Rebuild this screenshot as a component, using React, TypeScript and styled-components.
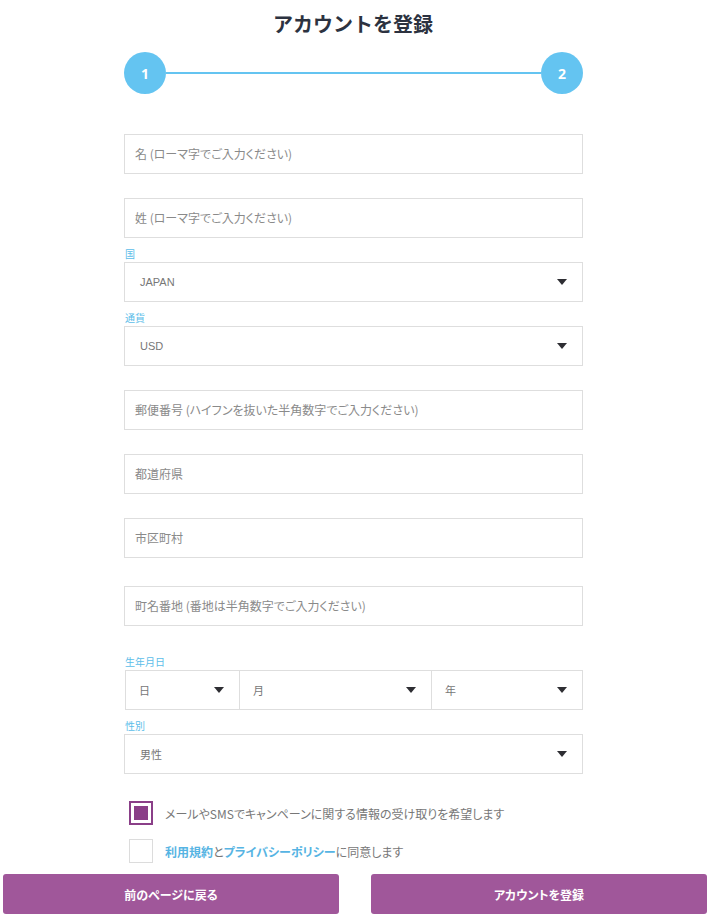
import { createGlobalStyle, styled } from 'styled-components';

const GlobalStyle = createGlobalStyle`
  body {
    margin: 0;
    background: #fff;
    font-family: 'Noto Sans CJK JP', 'Liberation Sans', sans-serif;
    font-feature-settings: 'palt';
  }
  * {
    box-sizing: border-box;
  }
  input, button {
    font-feature-settings: 'palt';
  }
`;

const Page = styled.div`
  width: 712px;
  padding-top: 11px;
`;

const Title = styled.h1`
  margin: 0;
  padding-right: 6px;
  text-align: center;
  font-size: 20px;
  line-height: 26px;
  font-weight: 700;
  color: #2c3240;
  font-feature-settings: normal;
`;

const Stepper = styled.div`
  display: flex;
  align-items: center;
  width: 459px;
  margin: 15px 0 0 124px;
`;

const StepCircle = styled.div`
  width: 42px;
  height: 42px;
  border-radius: 50%;
  background: #64c4f1;
  color: #fff;
  display: flex;
  align-items: center;
  justify-content: center;
  font-family: 'Open Sans', 'Liberation Sans', sans-serif;
  font-weight: 700;
  font-size: 14px;
`;

const StepLine = styled.div`
  flex: 1;
  height: 2px;
  background: #64c4f1;
`;

const Form = styled.form`
  width: 459px;
  margin: 40px 0 0 124px;
`;

const Group = styled.div<{ $gap: number }>`
  margin-top: ${(p) => p.$gap}px;
`;

const Label = styled.div`
  height: 14px;
  font-size: 10px;
  line-height: 12px;
  color: #5cbde9;
  padding-left: 1px;
`;

const TextInput = styled.input`
  display: block;
  width: 100%;
  height: 40px;
  border: 1px solid #dedede;
  border-radius: 0;
  padding: 0 10px 2px;
  font-family: 'Noto Sans CJK JP', 'Liberation Sans', sans-serif;
  font-size: 12px;
  color: #555;
  &::placeholder {
    color: #8a8a8a;
  }
`;

const SelectBox = styled.div`
  display: flex;
  align-items: center;
  justify-content: space-between;
  height: 40px;
  border: 1px solid #dedede;
  padding: 0 15px;
  font-family: 'Liberation Sans', 'Noto Sans CJK JP', sans-serif;
  font-size: 11px;
  color: #777;
`;

const Caret = styled.span`
  width: 0;
  height: 0;
  border-left: 5px solid transparent;
  border-right: 5px solid transparent;
  border-top: 6px solid #2e2e33;
`;

const DateRow = styled.div`
  display: grid;
  grid-template-columns: 113px 192px 1fr;
  margin-left: 1px;
  border: 1px solid #dedede;
  & > div {
    border: 0;
    height: 38px;
    padding-left: 13px;
  }
  & > div + div {
    border-left: 1px solid #dedede;
  }
`;

const CheckRow = styled.label<{ $gap: number }>`
  display: flex;
  align-items: center;
  gap: 12px;
  margin: ${(p) => p.$gap}px 0 0 5px;
  font-size: 12px;
  color: #777;
`;

const Box = styled.span<{ $checked?: boolean }>`
  width: 24px;
  height: 24px;
  flex: none;
  padding: 3px;
  border: ${(p) => (p.$checked ? '2px solid #8a3f88' : '1px solid #dcdcdc')};
  &::after {
    content: '';
    display: ${(p) => (p.$checked ? 'block' : 'none')};
    width: 14px;
    height: 14px;
    background: #8a3f88;
  }
`;

const Link = styled.span`
  color: #56b4e3;
  font-weight: 700;
`;

const Buttons = styled.div`
  display: grid;
  grid-template-columns: 336px 336px;
  gap: 32px;
  margin: 11px 0 0 3px;
`;

const Button = styled.button`
  height: 40px;
  border: 0;
  border-radius: 3px;
  background: #a0579a;
  color: #fff;
  font-family: 'Noto Sans CJK JP', 'Liberation Sans', sans-serif;
  font-size: 12px;
  font-weight: 700;
  cursor: pointer;
`;

const Select = ({ value }: { value: string }) => (
  <SelectBox>
    <span>{value}</span>
    <Caret />
  </SelectBox>
);

export default function App() {
  return (
    <Page>
      <GlobalStyle />
      <Title>アカウントを登録</Title>
      <Stepper>
        <StepCircle>1</StepCircle>
        <StepLine />
        <StepCircle>2</StepCircle>
      </Stepper>
      <Form>
        <TextInput placeholder="名 (ローマ字でご入力ください)" />
        <Group $gap={24}>
          <TextInput placeholder="姓 (ローマ字でご入力ください)" />
        </Group>
        <Group $gap={10}>
          <Label>国</Label>
          <Select value="JAPAN" />
        </Group>
        <Group $gap={10}>
          <Label>通貨</Label>
          <Select value="USD" />
        </Group>
        <Group $gap={24}>
          <TextInput placeholder="郵便番号 (ハイフンを抜いた半角数字でご入力ください)" />
        </Group>
        <Group $gap={24}>
          <TextInput placeholder="都道府県" />
        </Group>
        <Group $gap={24}>
          <TextInput placeholder="市区町村" />
        </Group>
        <Group $gap={28}>
          <TextInput placeholder="町名番地 (番地は半角数字でご入力ください)" />
        </Group>
        <Group $gap={30}>
          <Label>生年月日</Label>
          <DateRow>
            <Select value="日" />
            <Select value="月" />
            <Select value="年" />
          </DateRow>
        </Group>
        <Group $gap={10}>
          <Label>性別</Label>
          <Select value="男性" />
        </Group>
        <CheckRow $gap={27}>
          <Box $checked />
          メールやSMSでキャンペーンに関する情報の受け取りを希望します
        </CheckRow>
        <CheckRow $gap={14}>
          <Box />
          <span>
            <Link>利用規約</Link>と<Link>プライバシーポリシー</Link>に同意します
          </span>
        </CheckRow>
      </Form>
      <Buttons>
        <Button type="button">前のページに戻る</Button>
        <Button type="button">アカウントを登録</Button>
      </Buttons>
    </Page>
  );
}
